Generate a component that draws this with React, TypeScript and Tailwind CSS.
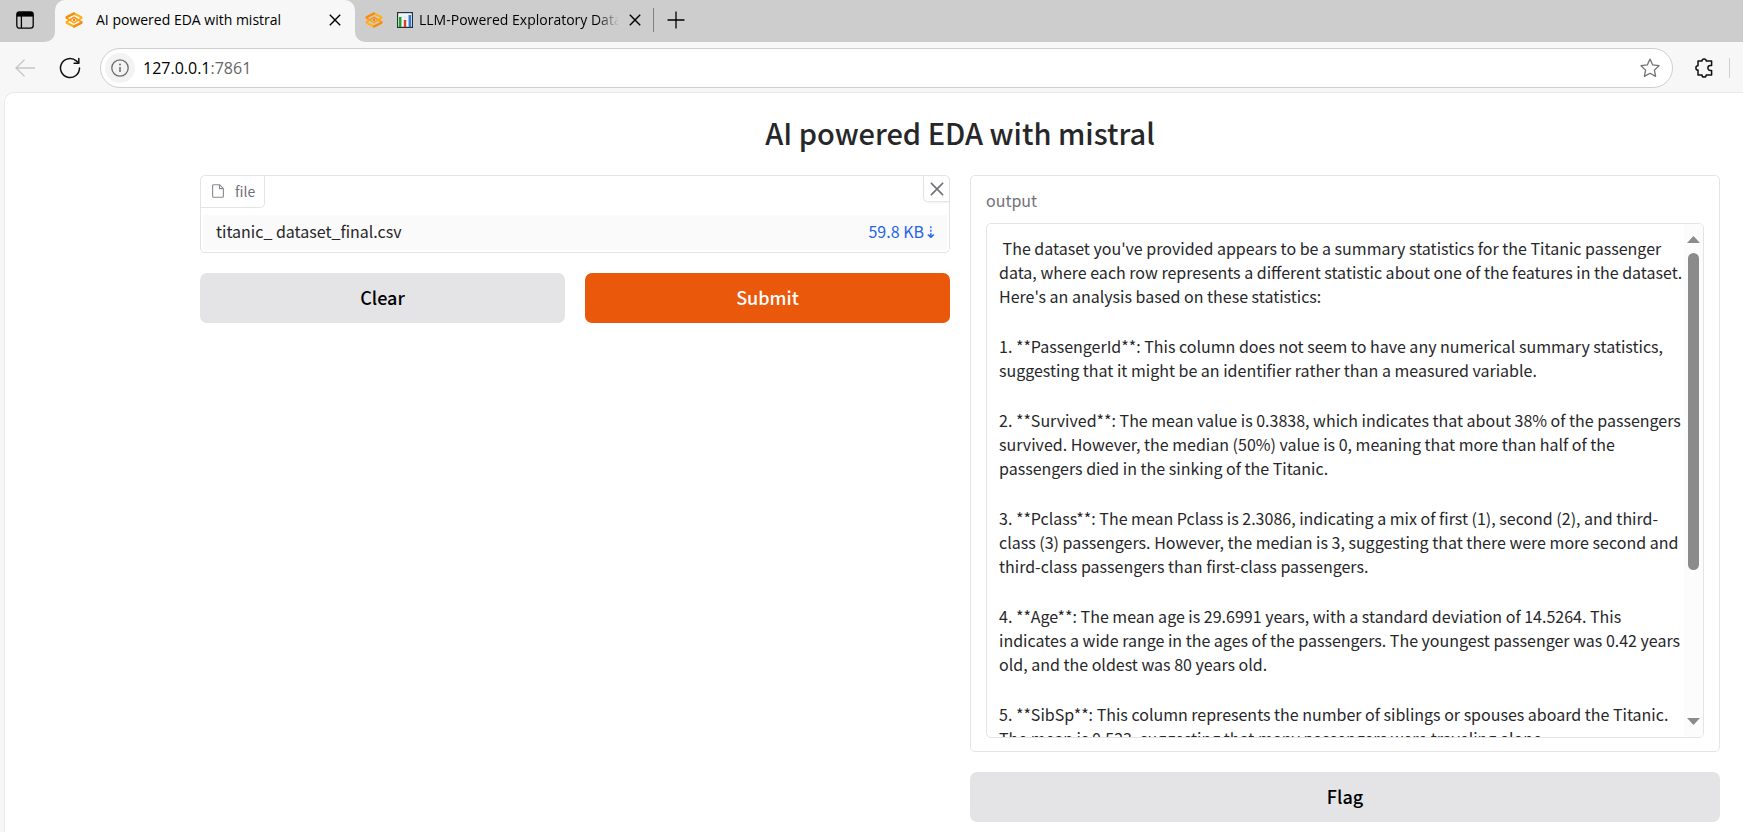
import React from "react";

const paragraphs = [
  " The dataset you've provided appears to be a summary statistics for the Titanic passenger data, where each row represents a different statistic about one of the features in the dataset. Here's an analysis based on these statistics:",
  "1. **PassengerId**: This column does not seem to have any numerical summary statistics, suggesting that it might be an identifier rather than a measured variable.",
  "2. **Survived**: The mean value is 0.3838, which indicates that about 38% of the passengers survived. However, the median (50%) value is 0, meaning that more than half of the passengers died in the sinking of the Titanic.",
  "3. **Pclass**: The mean Pclass is 2.3086, indicating a mix of first (1), second (2), and third-class (3) passengers. However, the median is 3, suggesting that there were more second and third-class passengers than first-class passengers.",
  "4. **Age**: The mean age is 29.6991 years, with a standard deviation of 14.5264. This indicates a wide range in the ages of the passengers. The youngest passenger was 0.42 years old, and the oldest was 80 years old.",
  "5. **SibSp**: This column represents the number of siblings or spouses aboard the Titanic. The mean is 0.523, suggesting that many passengers were traveling alone.",
];

function GradioLogo() {
  return (
    <svg viewBox="0 0 18 16" className="h-4 w-[18px] shrink-0" fill="none" strokeLinejoin="round" strokeLinecap="round" aria-hidden="true">
      <path d="M1.6 5.8V5.2L9 1.5l7.4 3.7v.6" stroke="#fdb515" strokeWidth="2.2" />
      <path d="M1.6 10.2v.6L9 14.5l7.4-3.7v-.6" stroke="#fdb515" strokeWidth="2.2" />
      <path d="M9 1.5 1.600 5.2v.6" stroke="#fb8a0e" strokeWidth="2.2" />
      <path d="m9 14.5 7.4-3.7v-.6" stroke="#fb8a0e" strokeWidth="2.2" />
      <path d="M2 6.4 4.600 8 9 5.200 13.400 8 16 9.6" stroke="#fc930f" strokeWidth="1.5" />
      <path d="M2 9.600 4.600 8 9 10.800 13.400 8 16 6.400" stroke="#fda512" strokeWidth="1.5" />
      <circle cx="9" cy="8" r="1.2" fill="#f97f16" />
    </svg>
  );
}

function ChartEmoji() {
  return (
    <svg viewBox="0 0 16 16" className="size-4 shrink-0" aria-hidden="true">
      <rect x=".6" y=".6" width="14.8" height="14.8" fill="#f3f8fb" stroke="#27303a" strokeWidth="1.2" />
      <path d="M4.5 1v14M8 1v14M11.5 1v14M1 5h14M1 9h14" stroke="#d5e3ec" strokeWidth=".6" />
      <path d="M2 5h2.4v10H2z" fill="#16a821" />
      <path d="M6.8 8h2.4v7H6.8z" fill="#e03a2d" />
      <path d="M11.6 3H14v12h-2.4z" fill="#2b7fd6" />
    </svg>
  );
}

function Cross({ className }: { className: string }) {
  return (
    <svg viewBox="0 0 12 12" className={className} stroke="currentColor" aria-hidden="true">
      <path d="m.8.8 10.4 10.4M11.2.8.8 11.2" strokeWidth="1.4" />
    </svg>
  );
}

function TabStrip() {
  return (
    <div className="flex h-[42px] bg-[#cdcdcd]">
      <div className="w-[55px] bg-[#f7f7f7]">
        <div className="flex h-full items-center rounded-br-[10px] bg-[#cdcdcd] pb-[2px] pl-4">
          <button aria-label="Tab actions" className="text-black">
            <svg viewBox="0 0 18 18" className="size-[18px]" fill="none" stroke="currentColor" strokeWidth="1.3">
              <rect x=".8" y=".8" width="16.4" height="16.4" rx="2.6" />
              <path d="M1 1h16v4.6H1z" fill="currentColor" stroke="none" />
              <path d="M5.4 5v12" />
            </svg>
          </button>
        </div>
      </div>
      <div className="flex w-[300px] items-center rounded-t-[10px] bg-[#f7f7f7] pr-[14px] pb-[2px] pl-[10px]">
        <GradioLogo />
        <span className="ml-[13px] flex-1 text-sm whitespace-nowrap text-black">AI powered EDA with mistral</span>
        <button aria-label="Close tab">
          <Cross className="size-3" />
        </button>
      </div>
      <div className="flex-1 bg-[#f7f7f7]">
        <div className="flex h-full items-center rounded-bl-[10px] bg-[#cdcdcd] pb-[2px] pl-[10px]">
          <GradioLogo />
          <div className="ml-[14px] flex w-[222px] items-center gap-[6px] overflow-hidden mask-r-from-90% mask-r-to-100%">
            <ChartEmoji />
            <span className="text-sm whitespace-nowrap text-black">LLM-Powered Exploratory Data Analysis</span>
          </div>
          <button aria-label="Close tab" className="ml-[10px]">
            <Cross className="size-3" />
          </button>
          <div className="ml-3 h-6 w-px bg-[#808080]" />
          <button aria-label="New tab" className="ml-[13px]">
            <svg viewBox="0 0 18 18" className="size-[18px]" stroke="#000" strokeWidth="1.3">
              <path d="M9 .5v17M.5 9h17" />
            </svg>
          </button>
        </div>
      </div>
    </div>
  );
}

function Toolbar() {
  return (
    <div className="flex h-[50px] items-center pt-px pr-[13px] pl-[15px]">
      <button aria-label="Back" disabled>
        <svg viewBox="0 0 20 18" className="h-[18px] w-5" fill="none" stroke="#c6c6c6" strokeWidth="1.3">
          <path d="M20 9H1M9.5.7 1 9l8.5 8.3" />
        </svg>
      </button>
      <button aria-label="Refresh" className="ml-6">
        <svg viewBox="0 0 22 22" className="size-[22px]" fill="none" stroke="#111" strokeWidth="1.5" strokeLinecap="round" strokeLinejoin="round">
          <path d="M20.5 11a9.5 9.5 0 1 1-3.2-7.1L19.6 6" />
          <path d="M19.8 1.5v4.7h-4.7" />
        </svg>
      </button>
      <div className="ml-[19px] flex h-10 flex-1 items-center rounded-full border border-[#cfcfcf] bg-white pr-3 pl-1">
        <button aria-label="Site information" className="flex size-[30px] items-center justify-center rounded-full bg-[#f3f3f3]">
          <svg viewBox="0 0 18 18" className="size-[18px]" fill="none" stroke="#6b6b6b" strokeWidth="1.3">
            <circle cx="9" cy="9" r="8.2" />
            <path d="M9 8v5" strokeWidth="1.5" />
            <circle cx="9" cy="5.5" r=".95" fill="#6b6b6b" stroke="none" />
          </svg>
        </button>
        <a href="http://127.0.0.1:7861" className="ml-2 flex-1 text-base text-black">
          127.0.0.1<span className="text-[#666]">:7861</span>
        </a>
        <button aria-label="Add to favourites">
          <svg viewBox="0 0 20 20" className="size-5" fill="none" stroke="#717171" strokeWidth="1.3" strokeLinejoin="round">
            <path d="m10 1.1 2.7 5.8 6.3.8-4.6 4.4 1.2 6.3-5.6-3.1-5.6 3.1 1.2-6.3L1 7.7l6.3-.8z" />
          </svg>
        </button>
      </div>
      <button aria-label="Extensions" className="ml-[21px]">
        <svg viewBox="0 0 20 20" className="size-5" fill="none" stroke="#111" strokeWidth="1.5" strokeLinejoin="round">
          <path d="M4 3h4a2.1 2.1 0 0 1 4.2 0h5.4v4.6h-1.3a2.4 2.4 0 0 0 0 4.8h1.3V17h-5.4a2.1 2.1 0 0 1-4.2 0H4v-5a2.1 2.1 0 0 1 0-4.2z" />
        </svg>
      </button>
      <div className="ml-[15px] h-5 w-px bg-[#cfcfcf]" />
    </div>
  );
}

function FilePanel() {
  return (
    <section>
      <div className="rounded-[5px] border border-[#e4e4e7] bg-white">
        <div className="flex items-start justify-between">
          <div className="flex h-8 items-center gap-[11px] rounded-br-[5px] border-r border-b border-[#e4e4e7] pr-[9px] pb-px pl-[11px]">
            <svg viewBox="0 0 12 14" className="h-[14px] w-3" fill="none" stroke="#8a8a92" strokeWidth="1.1" strokeLinejoin="round" aria-hidden="true">
              <path d="M7.5.7H1.6a1 1 0 0 0-1 1v10.6a1 1 0 0 0 1 1h8.800a1 1 0 0 0 1-1V4.600zM7.500.7v3.900h3.900" />
            </svg>
            <span className="text-sm text-[#71717a]">file</span>
          </div>
          <button aria-label="Remove file" className="flex size-[26px] items-center justify-center rounded-bl-[5px] border-b border-l border-[#e4e4e7] text-[#71717a] shadow-xs">
            <Cross className="size-[14px]" />
          </button>
        </div>
        <div className="px-[2px] pt-[7px] pb-[2px]">
          <table className="w-full bg-[#fafafa] text-base text-[#27272a]">
            <tbody>
              <tr className="h-[35px]">
                <td className="pb-[3px] pl-[13px]">titanic_ dataset_final.csv</td>
                <td className="pr-[10px] pb-[3px]">
                  <a href="#download" className="flex justify-end text-[#2563eb]">
                    <span>59.8 KB</span>
                    <span>⇣</span>
                  </a>
                </td>
              </tr>
            </tbody>
          </table>
        </div>
      </div>
      <div className="mt-5 grid grid-cols-2 gap-5">
        <button className="h-[50px] rounded-[7px] bg-[#e4e4e7] pb-[2px] text-lg font-medium text-black">Clear</button>
        <button className="h-[50px] rounded-[7px] bg-[#ea580c] pb-[2px] text-lg font-medium text-white">Submit</button>
      </div>
    </section>
  );
}

function OutputPanel() {
  return (
    <section>
      <div className="rounded-[5px] border border-[#e4e4e7] bg-white px-[15px] pt-3 pb-[13px]">
        <label htmlFor="output" className="block text-base leading-6 text-[#71717a]">output</label>
        <div className="mt-[11px] flex h-[515px] overflow-hidden rounded-[5px] border border-[#e4e4e7]">
          <output id="output" className="flex flex-1 flex-col gap-[26px] overflow-y-auto pt-3 pb-3 pl-3 text-base leading-6 text-[#27272a] [scrollbar-width:none]">
            {paragraphs.map((text) => (
              <p key={text} className="whitespace-pre-wrap">{text}</p>
            ))}
          </output>
          <div className="flex w-[19px] flex-col items-center bg-[#fcfcfc] py-3" aria-hidden="true">
            <svg viewBox="0 0 13 7" className="h-[7px] w-[13px]" fill="#8b8b8b"><path d="M6.5 0 13 7H0z" /></svg>
            <div className="mt-[10px] h-[317px] w-[11px] rounded-full bg-[#8b8b8b]" />
            <svg viewBox="0 0 13 7" className="mt-auto h-[7px] w-[13px]" fill="#8b8b8b"><path d="M0 0h13L6.5 7z" /></svg>
          </div>
        </div>
      </div>
      <button className="mt-5 h-[50px] w-full rounded-[7px] bg-[#e4e4e7] pb-[2px] text-lg font-medium text-black">Flag</button>
    </section>
  );
}

export default function App() {
  return (
    <div className="flex min-h-screen flex-col bg-[#f7f7f7] font-['Open_Sans',sans-serif]">
      <TabStrip />
      <Toolbar />
      <main className="ml-1 flex-1 rounded-tl-[10px] border-t border-l border-[#e9e9e9] bg-white pr-[23px] pl-[195px] font-['Noto_Sans_CJK_SC',sans-serif]">
        <h1 className="pt-[19px] pb-[23px] text-center text-[29px] leading-10 font-medium text-[#27272a]">AI powered EDA with mistral</h1>
        <div className="grid grid-cols-2 items-start gap-5">
          <FilePanel />
          <OutputPanel />
        </div>
      </main>
    </div>
  );
}
